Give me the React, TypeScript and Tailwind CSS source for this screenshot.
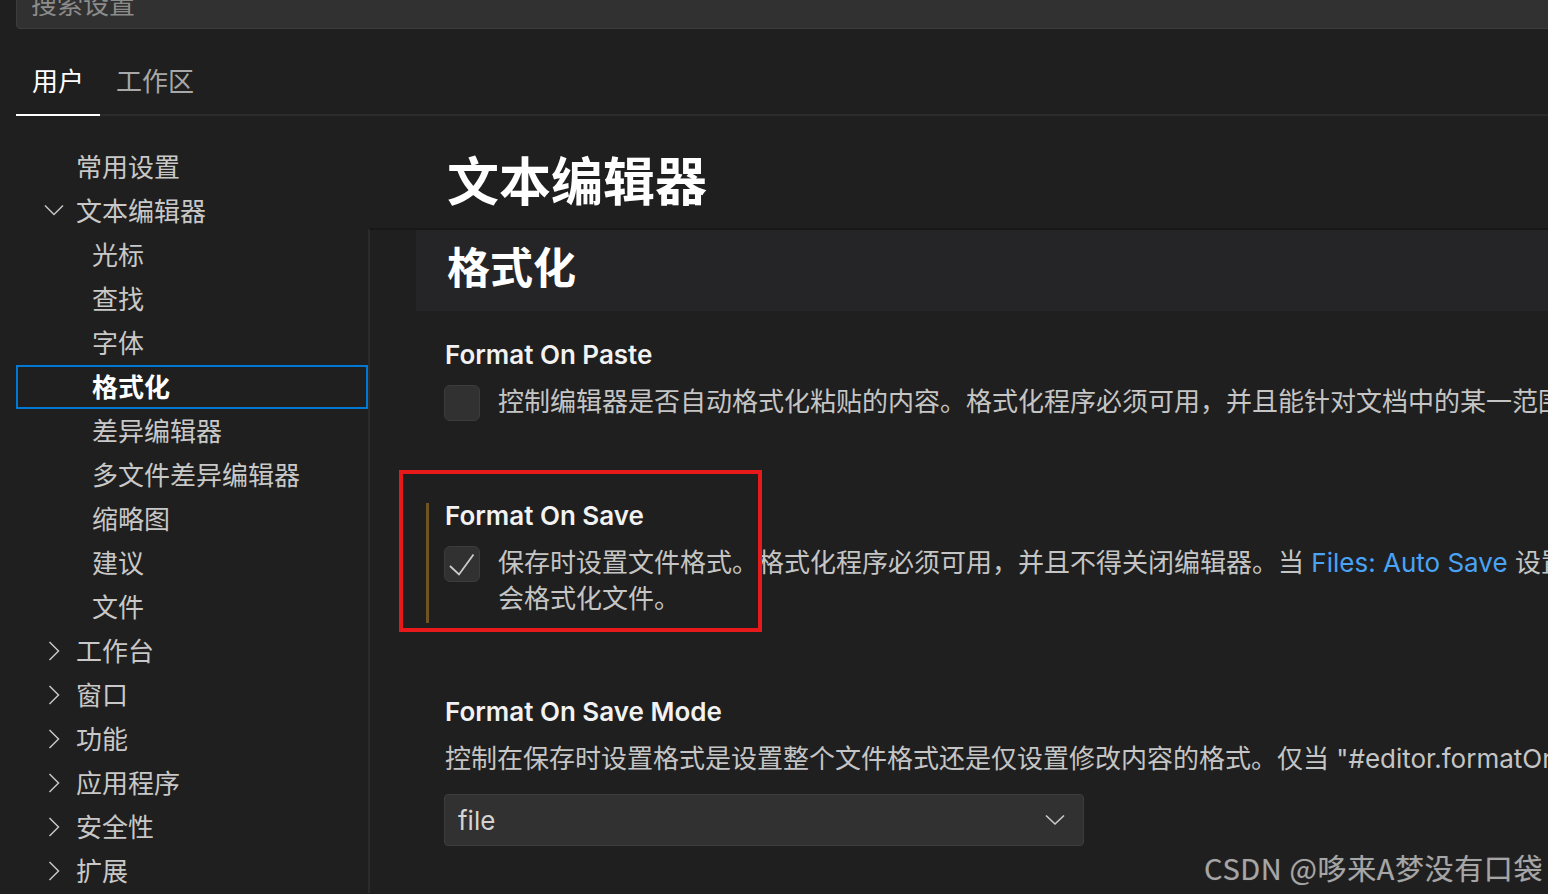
type NavItem = {
  label: string;
  level: 1 | 2;
  chevron?: "down" | "right";
  active?: boolean;
};

const navItems: NavItem[] = [
  { label: "常用设置", level: 1 },
  { label: "文本编辑器", level: 1, chevron: "down" },
  { label: "光标", level: 2 },
  { label: "查找", level: 2 },
  { label: "字体", level: 2 },
  { label: "格式化", level: 2, active: true },
  { label: "差异编辑器", level: 2 },
  { label: "多文件差异编辑器", level: 2 },
  { label: "缩略图", level: 2 },
  { label: "建议", level: 2 },
  { label: "文件", level: 2 },
  { label: "工作台", level: 1, chevron: "right" },
  { label: "窗口", level: 1, chevron: "right" },
  { label: "功能", level: 1, chevron: "right" },
  { label: "应用程序", level: 1, chevron: "right" },
  { label: "安全性", level: 1, chevron: "right" },
  { label: "扩展", level: 1, chevron: "right" },
];

function Chevron({ dir }: { dir: "down" | "right" }) {
  return (
    <svg width="24" height="24" viewBox="0 0 24 24" fill="none" stroke="#c5c5c5" strokeWidth="1.5">
      {dir === "down" ? <path d="M3 6.5 L12 15.5 L21 6.5" /> : <path d="M7.5 3 L16.5 12 L7.5 21" />}
    </svg>
  );
}

function NavRow({ item }: { item: NavItem }) {
  if (item.active) {
    return (
      <div className="h-[44px] flex items-center border-2 border-[#0078d4] pl-[74px] text-white font-bold">
        {item.label}
      </div>
    );
  }
  if (item.chevron) {
    return (
      <div className="h-[44px] flex items-center pl-[26px] text-[#c8c8c8]">
        <Chevron dir={item.chevron} />
        <span className="ml-[10px]">{item.label}</span>
      </div>
    );
  }
  return (
    <div
      className={
        item.level === 1
          ? "h-[44px] flex items-center pl-[60px] text-[#c8c8c8]"
          : "h-[44px] flex items-center pl-[76px] text-[#c8c8c8]"
      }
    >
      {item.label}
    </div>
  );
}

function Checkbox({ checked = false }: { checked?: boolean }) {
  return (
    <div className="w-[36px] h-[36px] shrink-0 -ml-[1px] rounded-[6px] bg-[#313131] border border-[#3c3c3c]">
      {checked && (
        <svg width="34" height="34" viewBox="0 0 34 34" fill="none" stroke="#cccccc" strokeWidth="1.8">
          <path d="M5 19 L14 27.5 L28.5 7.5" />
        </svg>
      )}
    </div>
  );
}

export default function App() {
  return (
    <div className="relative w-[1548px] h-[894px] overflow-hidden bg-[#1f1f1f] font-['Inter','Noto_Sans_CJK_SC',sans-serif] text-[26px]">
      {/* search */}
      <div className="ml-[16px] -mt-[20px] h-[49px] w-[1560px] flex items-center pl-[14px] bg-[#313131] border border-[#3c3c3c] rounded-[4px] text-[#8c8c8c]">
        搜索设置
      </div>

      {/* tabs */}
      <div className="ml-[16px] h-[87px] flex items-end border-b-2 border-[#2b2b2b]">
        <div className="-mb-[2px] px-[16px] pb-[14px] leading-[36px] border-b-2 border-white text-white">
          用户
        </div>
        <div className="-mb-[2px] px-[16px] pb-[14px] leading-[36px] border-b-2 border-transparent text-[#a8a8a8]">
          工作区
        </div>
      </div>

      <div className="flex">
        {/* table of contents */}
        <div className="ml-[16px] w-[352px] shrink-0 pt-[29px]">
          {navItems.map((item) => (
            <NavRow key={item.label} item={item} />
          ))}
        </div>

        {/* settings */}
        <div className="flex-1 flex flex-col min-w-0">
          <div className="h-[112px] pl-[79px] pt-[35px] text-[52px] leading-[64px] font-bold text-white">
            文本编辑器
          </div>
          <div className="flex-1 border-l-2 border-t-2 border-l-[#2b2b2b] border-t-[#181818]">
            <div className="ml-[46px] h-[81px] flex items-center pb-[5px] pl-[31px] bg-[#252527] text-[43px] font-bold text-white">
              格式化
            </div>

            {/* Format On Paste */}
            <div className="ml-[56px] mt-[31px] pb-[6px] pl-[16px] border-l-[3px] border-transparent">
              <div className="leading-[26px] text-[26px] font-semibold text-[#f2f2f2]">Format On Paste</div>
              <div className="mt-[17px] flex items-start">
                <Checkbox />
                <div className="ml-[18px] -mt-[1px] leading-[36px] whitespace-nowrap text-[#c5c5c5]">
                  控制编辑器是否自动格式化粘贴的内容。格式化程序必须可用，并且能针对文档中的某一范围进行格式化。
                </div>
              </div>
            </div>

            {/* Format On Save */}
            <div className="relative ml-[56px] mt-[76px] pb-[6px] pl-[16px] border-l-[3px] border-[#6e5423]">
              <div className="leading-[26px] text-[26px] font-semibold text-[#f2f2f2]">Format On Save</div>
              <div className="mt-[17px] flex items-start">
                <Checkbox checked />
                <div className="ml-[18px] -mt-[1px] leading-[36px] text-[#c5c5c5]">
                  <div className="whitespace-nowrap">
                    保存时设置文件格式。格式化程序必须可用，并且不得关闭编辑器。当{" "}
                    <span className="text-[#4aa3f5]">Files: Auto Save</span> 设置为 afterDelay 时，不
                  </div>
                  <div>会格式化文件。</div>
                </div>
              </div>
              <div className="absolute -left-[30px] -top-[33px] w-[363px] h-[162px] border-4 border-[#e8191b]" />
            </div>

            {/* Format On Save Mode */}
            <div className="ml-[56px] mt-[76px] pl-[16px] border-l-[3px] border-transparent">
              <div className="leading-[26px] text-[26px] font-semibold text-[#f2f2f2]">Format On Save Mode</div>
              <div className="mt-[16px] leading-[36px] whitespace-nowrap text-[#c5c5c5]">
                控制在保存时设置格式是设置整个文件格式还是仅设置修改内容的格式。仅当 "#editor.formatOnSave#" 处于启用状态时适用。
              </div>
              <div className="mt-[17px] -ml-[1px] w-[640px] h-[52px] flex items-center justify-between pl-[13px] pr-[16px] bg-[#313131] border border-[#3c3c3c] rounded-[4px] text-[#d4d4d4]">
                <span>file</span>
                <svg width="24" height="24" viewBox="0 0 24 24" fill="none" stroke="#cccccc" strokeWidth="1.6">
                  <path d="M3 7.5 L12 16 L21 7.5" />
                </svg>
              </div>
            </div>
          </div>
        </div>
      </div>

      {/* watermark */}
      <div className="absolute right-[5px] bottom-[10px] text-[29px] leading-[34px] tracking-[0.6px] text-[#a6a6a6] font-['Noto_Sans_CJK_SC',sans-serif] [text-shadow:0_0_1px_#555]">
        CSDN @哆来A梦没有口袋
      </div>
    </div>
  );
}
